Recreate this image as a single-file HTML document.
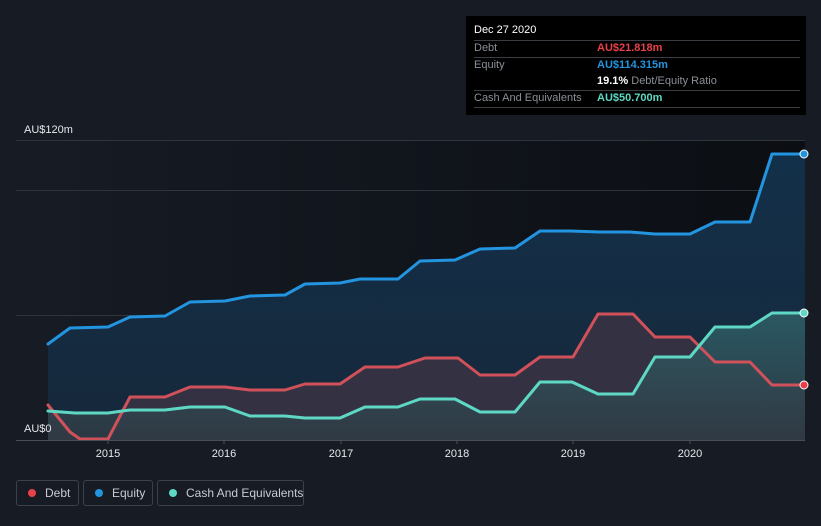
<!DOCTYPE html>
<html><head><meta charset="utf-8"><style>
body{margin:0;background:#161b24;width:821px;height:526px;overflow:hidden;font-family:"Liberation Sans",sans-serif;position:relative}
.tip{position:absolute;left:466px;top:16px;width:340px;height:99px;background:#000;}
.tip .r{position:absolute;left:8px;width:326px;font-size:11px;color:#8a8f96;white-space:nowrap}
.tip .v{position:absolute;left:123px;font-weight:bold}
.ln{position:absolute;left:8px;width:326px;height:1px;background:#3a3d42}
.leg{position:absolute;top:480px;height:26px;border:1px solid #3b404a;border-radius:3px;color:#c8ccd2;font-size:12px;line-height:24px;box-sizing:border-box;white-space:nowrap;overflow:hidden}
.dot{display:inline-block;width:8px;height:8px;border-radius:50%;margin:0 9px 0 11px;vertical-align:0px}
</style></head><body>
<svg width="821" height="526" style="position:absolute;left:0;top:0">
<defs>
<linearGradient id="bg" x1="0" x2="1" y1="0" y2="0"><stop offset="0" stop-color="#161b24"/><stop offset="1" stop-color="#0b0e13"/></linearGradient>
<linearGradient id="eq" x1="0" x2="0" y1="0" y2="1"><stop offset="0" stop-color="#13304a"/><stop offset="1" stop-color="#16283a"/></linearGradient>
<linearGradient id="cs" x1="0" x2="0" y1="0" y2="1"><stop offset="0" stop-color="#2e6068"/><stop offset="1" stop-color="#303a44"/></linearGradient>
</defs>
<rect x="48" y="140" width="757" height="300" fill="url(#bg)"/>
<g stroke="#30353d" stroke-width="1">
<line x1="16" y1="140.5" x2="805" y2="140.5"/><line x1="16" y1="190.5" x2="805" y2="190.5"/><line x1="16" y1="315.5" x2="805" y2="315.5"/>
</g>
<polygon fill="url(#eq)" points="48,344 70,328 108,327 130,317 165,316 190,302 225,301 250,296 285,295 305,284 340,283 360,279 398,279 420,261 455,260 480,249 515,248 540,231 570,231 600,232 630,232 655,234 690,234 715,222 750,222 772,154 805,154 805,440 48,440"/>
<polygon fill="#3a3344" opacity="0.85" points="48,405 70,432 80,439 108,439 130,397 165,397 190,387 225,387 250,390 285,390 305,384 340,384 365,367 398,367 425,358 458,358 480,375 515,375 540,357 573,357 598,314 633,314 655,337 690,337 715,362 750,362 772,385 805,385 805,440 48,440"/>
<polygon fill="url(#cs)" opacity="0.85" points="48,411 75,413 108,413 130,410 165,410 190,407 225,407 250,416 285,416 305,418 340,418 365,407 398,407 420,399 455,399 480,412 515,412 540,382 572,382 598,394 633,394 655,357 690,357 715,327 750,327 772,313 805,313 805,440 48,440"/>
<g fill="none" stroke-width="3" stroke-linejoin="round" stroke-linecap="round">
<polyline stroke="#2394df" points="48,344 70,328 108,327 130,317 165,316 190,302 225,301 250,296 285,295 305,284 340,283 360,279 398,279 420,261 455,260 480,249 515,248 540,231 570,231 600,232 630,232 655,234 690,234 715,222 750,222 772,154 805,154"/>
<polyline stroke="#d0515a" points="48,405 70,432 80,439 108,439 130,397 165,397 190,387 225,387 250,390 285,390 305,384 340,384 365,367 398,367 425,358 458,358 480,375 515,375 540,357 573,357 598,314 633,314 655,337 690,337 715,362 750,362 772,385 805,385"/>
<polyline stroke="#5ed8c4" points="48,411 75,413 108,413 130,410 165,410 190,407 225,407 250,416 285,416 305,418 340,418 365,407 398,407 420,399 455,399 480,412 515,412 540,382 572,382 598,394 633,394 655,357 690,357 715,327 750,327 772,313 805,313"/>
</g>
<circle cx="804" cy="154" r="4" fill="#2394df" stroke="#fff" stroke-width="1"/>
<circle cx="804" cy="313" r="4" fill="#5ed8c4" stroke="#fff" stroke-width="1"/>
<circle cx="804" cy="385" r="4" fill="#e8404a" stroke="#fff" stroke-width="1"/>
<line x1="16" y1="440.5" x2="805" y2="440.5" stroke="#4a4f57"/>
<g stroke="#4a4f57"><line x1="108" y1="440" x2="108" y2="444"/><line x1="224" y1="440" x2="224" y2="444"/><line x1="341" y1="440" x2="341" y2="444"/><line x1="457" y1="440" x2="457" y2="444"/><line x1="573" y1="440" x2="573" y2="444"/><line x1="690" y1="440" x2="690" y2="444"/></g>
<g fill="#e6e8eb" font-size="11" font-family="Liberation Sans,sans-serif" text-anchor="middle">
<text x="108" y="457">2015</text><text x="224" y="457">2016</text><text x="341" y="457">2017</text><text x="457" y="457">2018</text><text x="573" y="457">2019</text><text x="690" y="457">2020</text>
<text x="24" y="133" text-anchor="start">AU$120m</text>
<text x="24" y="432" text-anchor="start">AU$0</text>
</g>
</svg>
<div class="tip">
<div class="r" style="top:8px;color:#fff;">Dec 27 2020</div>
<div class="ln" style="top:24px"></div>
<div class="r" style="top:26px">Debt<span class="v" style="color:#e8414a">AU$21.818m</span></div>
<div class="ln" style="top:41px"></div>
<div class="r" style="top:43px">Equity<span class="v" style="color:#2394df">AU$114.315m</span></div>
<div class="r" style="top:59px"><span class="v" style="color:#fff;left:123px">19.1% <span style="color:#8a8f96;font-weight:normal">Debt/Equity Ratio</span></span></div>
<div class="ln" style="top:74px"></div>
<div class="r" style="top:76px">Cash And Equivalents<span class="v" style="color:#5ed8c4">AU$50.700m</span></div>
<div class="ln" style="top:91px"></div>
</div>
<div class="leg" style="left:16px;width:63px"><span class="dot" style="background:#e8414a"></span>Debt</div>
<div class="leg" style="left:83px;width:70px"><span class="dot" style="background:#2394df"></span>Equity</div>
<div class="leg" style="left:157px;width:147px"><span class="dot" style="background:#5ed8c4"></span>Cash And Equivalents</div>
</body></html>
